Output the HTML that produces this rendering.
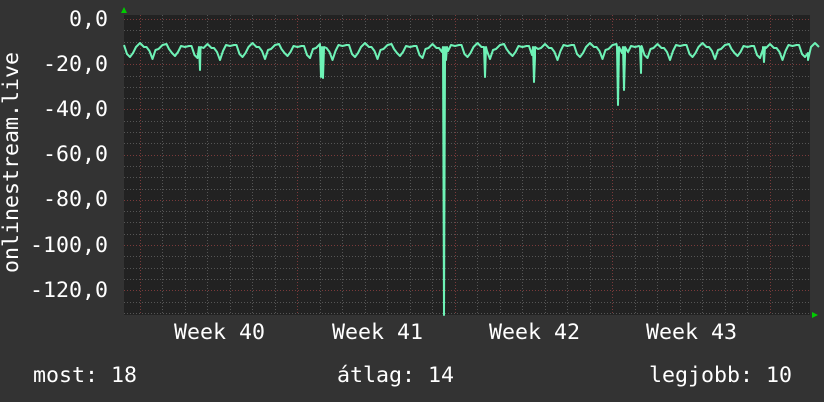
<!DOCTYPE html>
<html><head><style>
html,body{margin:0;padding:0;background:#333;}
body{width:824px;height:402px;position:relative;overflow:hidden;font-family:"DejaVu Sans Mono","Liberation Mono",monospace;color:#fff;}
.t{position:absolute;font-size:21.6px;line-height:21px;white-space:pre;}
.yl{position:absolute;right:716px;font-size:21.6px;line-height:21px;text-align:right;}
</style></head><body>
<svg width="824" height="402" style="position:absolute;left:0;top:0">
<rect x="124" y="15" width="686" height="300" fill="#222"/>
<g id="grid" stroke-width="1" stroke-dasharray="1,2"></g>
<polyline id="ln" fill="none" stroke="#6ef2b6" stroke-width="2" stroke-linejoin="round"/>
<polygon points="121,13 127,13 124,7" fill="#0c0"/>
<polygon points="812,312 812,318 818,315" fill="#0c0"/>
</svg>
<div class="yl" style="top:9px">0,0</div>
<div class="yl" style="top:54px">-20,0</div>
<div class="yl" style="top:99px">-40,0</div>
<div class="yl" style="top:144px">-60,0</div>
<div class="yl" style="top:189px">-80,0</div>
<div class="yl" style="top:235px">-100,0</div>
<div class="yl" style="top:280px">-120,0</div>
<div class="t" style="left:-97px;top:154px;transform:rotate(-90deg);width:217px;text-align:center">onlinestream.live</div>
<div class="t" style="left:174px;top:322px">Week 40</div>
<div class="t" style="left:332px;top:322px">Week 41</div>
<div class="t" style="left:489px;top:322px">Week 42</div>
<div class="t" style="left:646px;top:322px">Week 43</div>
<div class="t" style="left:33px;top:365px">most: 18</div>
<div class="t" style="left:337px;top:365px">átlag: 14</div>
<div class="t" style="left:649px;top:365px">legjobb: 10</div>
<script>
var g=document.getElementById('grid'),s='';
for(var i=0;i<27;i++){var y=19+i*11.3;if(y>315)break;var maj=(i%4==0);
s+='<line x1="124" x2="810" y1="'+(Math.round(y)+.5)+'" y2="'+(Math.round(y)+.5)+'" stroke="'+(maj?'#7a3a3a':'#555')+'"/>';}
for(var d=-6;d<40;d++){var x=139.5+d*22.5;if(x<124||x>810)continue;var maj=(d%7==0);
s+='<line y1="15" y2="315" x1="'+(Math.round(x)+.5)+'" x2="'+(Math.round(x)+.5)+'" stroke="'+(maj?'#7a3a3a':'#555')+'"/>';}
g.innerHTML=s;
var p=[];
var pat=[[0,47],[3,53],[6,58],[9,51],[12,47],[16,45],[20,46]];
var k=0;
for(var x=124;x<808;x+=22.5){for(var j=0;j<pat.length;j++){var yy=pat[j][1]+((k*7+j*3)%5)-2;p.push([x+pat[j][0],yy]);}k++;}
var spikes=[[200,70],[321,77],[323,78],[444,315],[446,60],[485,77],[534,82],[618,105],[624,90],[641,73],[764,62]];
spikes.forEach(function(sp){p.push([sp[0]-1,47]);p.push([sp[0],sp[1]]);p.push([sp[0]+1,47]);});
p.push([808,60]);
p.sort(function(a,b){return a[0]-b[0]});
document.getElementById('ln').setAttribute('points',p.map(function(q){return q[0]+','+q[1]}).join(' '));
</script>
</body></html>
